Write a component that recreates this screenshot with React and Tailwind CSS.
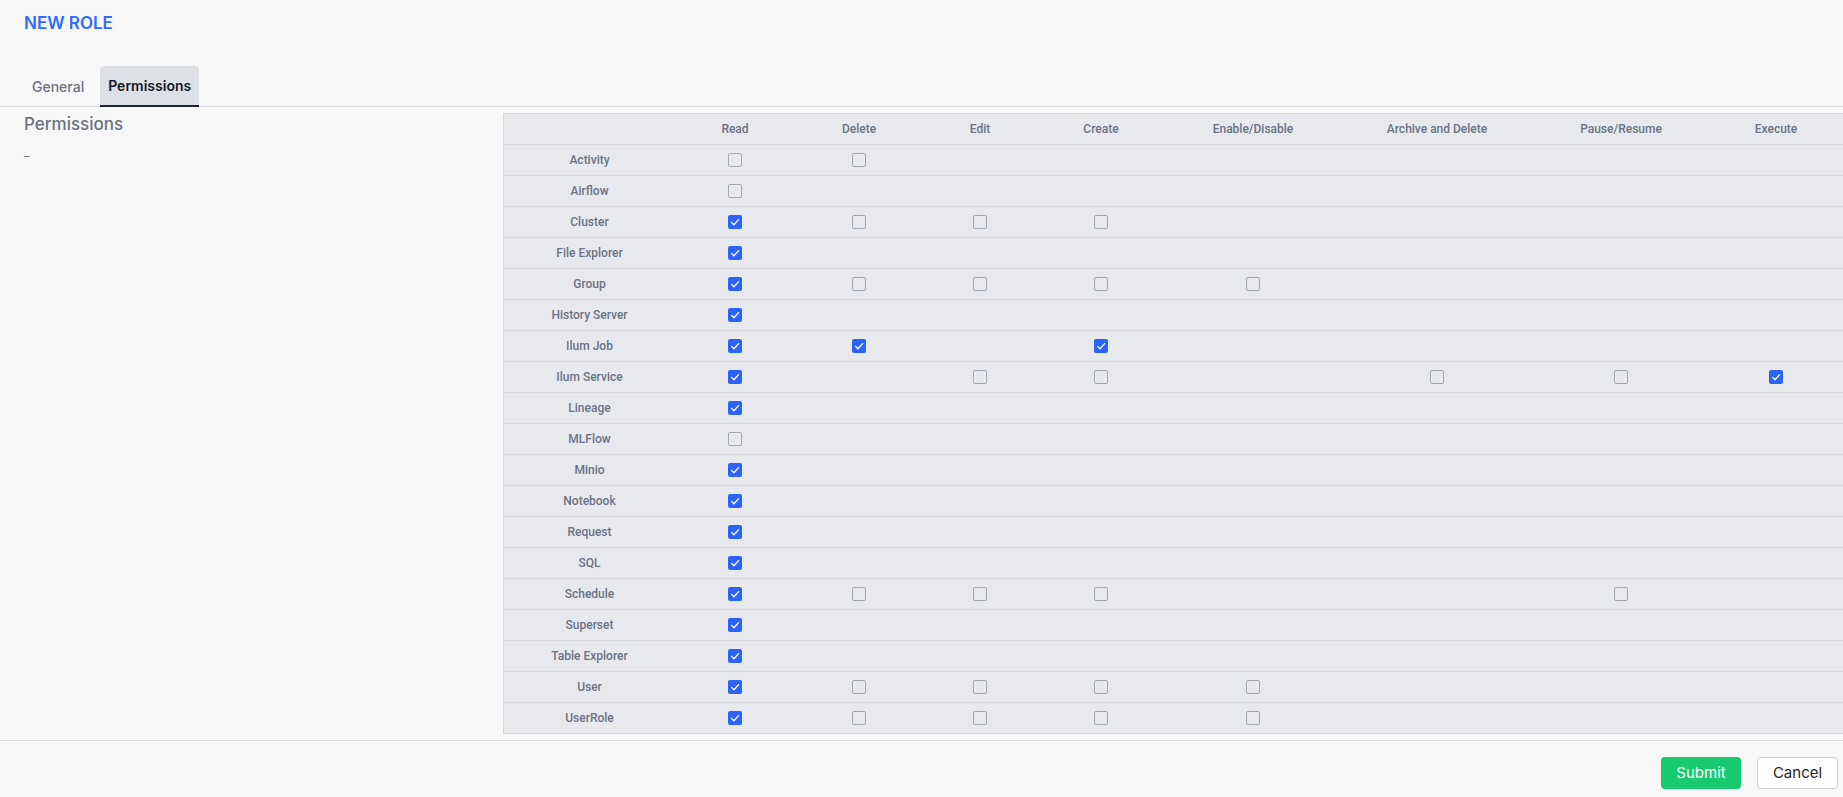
import React from 'react'

const columns = [
  { key: 'read', label: 'Read' },
  { key: 'delete', label: 'Delete' },
  { key: 'edit', label: 'Edit' },
  { key: 'create', label: 'Create' },
  { key: 'enable', label: 'Enable/Disable' },
  { key: 'archive', label: 'Archive and Delete' },
  { key: 'pause', label: 'Pause/Resume' },
  { key: 'execute', label: 'Execute' },
]

// 1 = checked, 0 = unchecked, missing = no checkbox
const rows = [
  { name: 'Activity', read: 0, delete: 0 },
  { name: 'Airflow', read: 0 },
  { name: 'Cluster', read: 1, delete: 0, edit: 0, create: 0 },
  { name: 'File Explorer', read: 1 },
  { name: 'Group', read: 1, delete: 0, edit: 0, create: 0, enable: 0 },
  { name: 'History Server', read: 1 },
  { name: 'Ilum Job', read: 1, delete: 1, create: 1 },
  { name: 'Ilum Service', read: 1, edit: 0, create: 0, archive: 0, pause: 0, execute: 1 },
  { name: 'Lineage', read: 1 },
  { name: 'MLFlow', read: 0 },
  { name: 'Minio', read: 1 },
  { name: 'Notebook', read: 1 },
  { name: 'Request', read: 1 },
  { name: 'SQL', read: 1 },
  { name: 'Schedule', read: 1, delete: 0, edit: 0, create: 0, pause: 0 },
  { name: 'Superset', read: 1 },
  { name: 'Table Explorer', read: 1 },
  { name: 'User', read: 1, delete: 0, edit: 0, create: 0, enable: 0 },
  { name: 'UserRole', read: 1, delete: 0, edit: 0, create: 0, enable: 0 },
]

const gridCols = 'grid grid-cols-[171px_120px_128px_114px_128px_176px_192px_176px_1fr]'

const Checkbox = ({ checked }) => {
  if (checked) {
    return (
      <span className="w-[14px] h-[14px] rounded-[2px] bg-[#2b63fb] flex items-center justify-center">
        <svg width="14" height="14" viewBox="0 0 14 14" fill="none">
          <polyline points="3.6,7.4 6,9.8 10.6,4.6" stroke="white" strokeWidth="1.3" strokeLinecap="round" strokeLinejoin="round" />
        </svg>
      </span>
    )
  }
  return <span className="w-[14px] h-[14px] rounded-[2px] border border-[#a1a8b3] bg-transparent"></span>
}

const App = () => {
  return (
    <div className="min-h-screen bg-[#f7f7f7] flex flex-col font-['Inter',sans-serif]">
      <div className="px-6 pt-[11px]">
        <h1 className="text-[17px] leading-[24px] font-semibold text-[#2f6bff]">NEW ROLE</h1>
      </div>

      <div className="mt-[31px] flex items-end gap-2 px-6 border-b border-[#dcdcdc] h-[41px]">
        <div className="h-[41px] -mb-px px-2 flex items-center text-[14px] font-medium text-[#6b7280]">General</div>
        <div className="h-[41px] -mb-px px-2 flex items-center text-[14px] font-semibold text-[#111827] bg-[#dde0e5] rounded-t-[4px] border-b-2 border-[#1f2530]">
          Permissions
        </div>
      </div>

      <div className="flex">
        <div className="w-[503px] shrink-0 pl-6 pt-[5px]">
          <h2 className="text-[17px] leading-[24px] font-medium text-[#6b7280]">Permissions</h2>
          <div className="mt-[13px] text-[11px] leading-[14px] text-[#6b7280]">–</div>
        </div>

        <div className="flex-1 mt-[6px] border-l border-t border-[#d6d8dd] bg-[#e8e9ed] font-['Roboto',sans-serif] text-[12px] font-medium text-[#6b7385]">
          <div className={`${gridCols} items-center h-[31px] border-b border-[#d6d8dd]`}>
            <div></div>
            {columns.map((c) => (
              <div key={c.key} className="text-center whitespace-nowrap">
                {c.label}
              </div>
            ))}
          </div>
          {rows.map((r) => (
            <div key={r.name} className={`${gridCols} items-center h-[31px] border-b border-[#d6d8dd]`}>
              <div className="text-center whitespace-nowrap">{r.name}</div>
              {columns.map((c) => (
                <div key={c.key} className="flex justify-center">
                  {r[c.key] !== undefined && <Checkbox checked={r[c.key] === 1} />}
                </div>
              ))}
            </div>
          ))}
        </div>
      </div>

      <div className="mt-[6px] border-t border-[#dcdcdc] flex justify-end gap-4 pt-[16px] pr-[5px] pb-[9px]">
        <button className="w-[80px] h-[32px] rounded-[4px] bg-[#17c96f] text-white text-[15px] font-['Inter',sans-serif]">
          Submit
        </button>
        <button className="w-[81px] h-[32px] rounded-[4px] bg-white border border-[#c9cdd3] text-[#27272a] text-[15px]">
          Cancel
        </button>
      </div>
    </div>
  )
}

export default App
